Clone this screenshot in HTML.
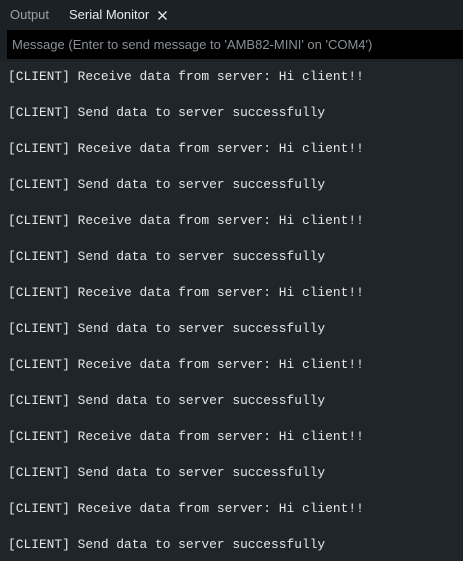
<!DOCTYPE html>
<html><head><style>
html,body{margin:0;padding:0;width:463px;height:561px;overflow:hidden;background:#1f2529;}
.hdr{position:absolute;left:0;top:0;width:463px;height:62px;background:#1c2125;}
.tab{position:absolute;top:7px;font:13px "Liberation Sans",sans-serif;color:#9aa0a6;}
.tab.act{color:#e8eaed;}
.x{position:absolute;left:157px;top:10px;}
.inp{position:absolute;left:7px;top:30px;width:456px;height:29px;background:#000;}
.inp span{position:absolute;left:5px;top:7px;font:13px "Liberation Sans",sans-serif;color:#8a9096;white-space:nowrap;}
.ln{position:absolute;left:8px;font:12.9px "Liberation Mono",monospace;color:#e6e6e6;white-space:pre;}
</style></head><body>
<div class="hdr"></div>
<div class="tab" style="left:10px">Output</div>
<div class="tab act" style="left:69px">Serial Monitor</div>
<svg class="x" width="11" height="11" viewBox="0 0 11 11"><path d="M1.5 1.5L9.5 9.5M9.5 1.5L1.5 9.5" stroke="#e8eaed" stroke-width="1.4"/></svg>
<div class="inp"><span>Message (Enter to send message to 'AMB82-MINI' on 'COM4')</span></div>
<div class="ln" style="top:69px">[CLIENT] Receive data from server: Hi client!!</div>
<div class="ln" style="top:105px">[CLIENT] Send data to server successfully</div>
<div class="ln" style="top:141px">[CLIENT] Receive data from server: Hi client!!</div>
<div class="ln" style="top:177px">[CLIENT] Send data to server successfully</div>
<div class="ln" style="top:213px">[CLIENT] Receive data from server: Hi client!!</div>
<div class="ln" style="top:249px">[CLIENT] Send data to server successfully</div>
<div class="ln" style="top:285px">[CLIENT] Receive data from server: Hi client!!</div>
<div class="ln" style="top:321px">[CLIENT] Send data to server successfully</div>
<div class="ln" style="top:357px">[CLIENT] Receive data from server: Hi client!!</div>
<div class="ln" style="top:393px">[CLIENT] Send data to server successfully</div>
<div class="ln" style="top:429px">[CLIENT] Receive data from server: Hi client!!</div>
<div class="ln" style="top:465px">[CLIENT] Send data to server successfully</div>
<div class="ln" style="top:501px">[CLIENT] Receive data from server: Hi client!!</div>
<div class="ln" style="top:537px">[CLIENT] Send data to server successfully</div>
</body></html>
